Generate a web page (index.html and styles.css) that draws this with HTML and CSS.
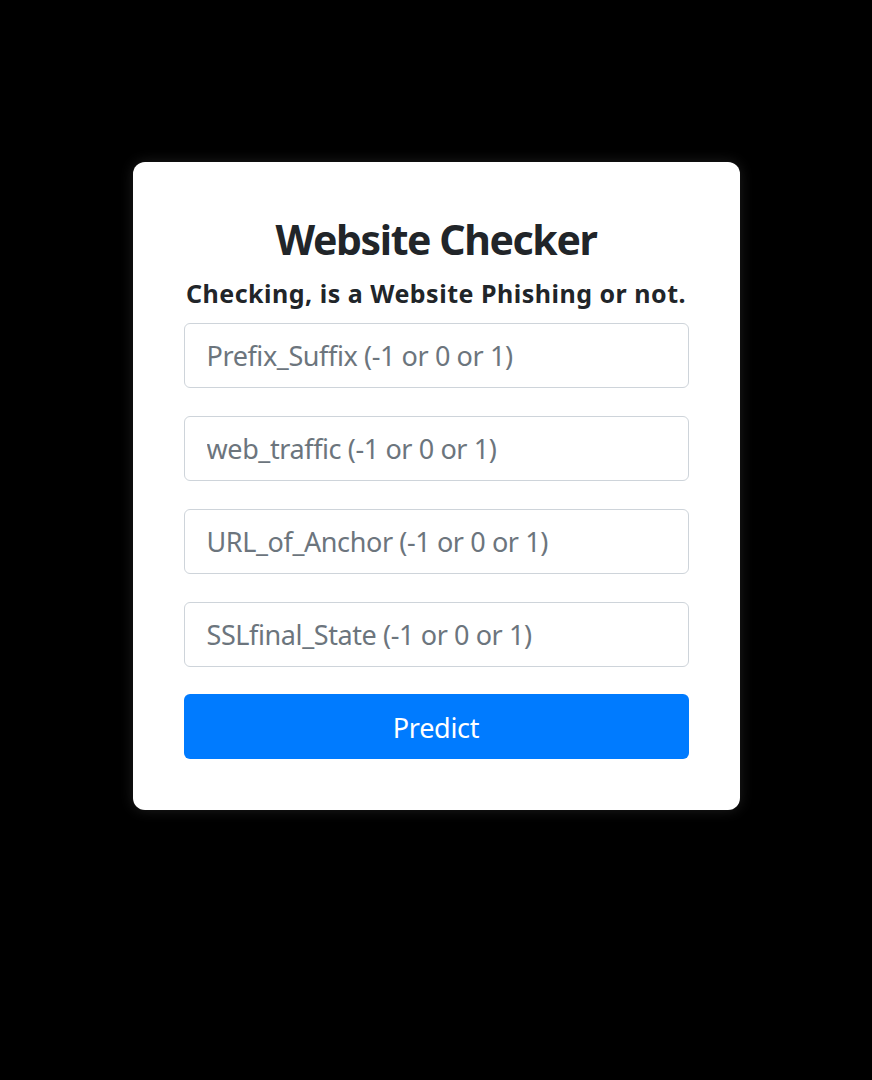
FILE: index.html
```html
<!DOCTYPE html>
<html lang="en">
<head>
<meta charset="utf-8">
<title>Website Checker</title>
<link rel="stylesheet" href="styles.css">
</head>
<body>
<main class="page">
  <form class="card">
    <h1 class="title">Website Checker</h1>
    <h2 class="subtitle">Checking, is a Website Phishing or not.</h2>
    <input class="field" type="text" placeholder="Prefix_Suffix (-1 or 0 or 1)">
    <input class="field" type="text" placeholder="web_traffic (-1 or 0 or 1)">
    <input class="field" type="text" placeholder="URL_of_Anchor (-1 or 0 or 1)">
    <input class="field" type="text" placeholder="SSLfinal_State (-1 or 0 or 1)">
    <button class="btn" type="button">Predict</button>
  </form>
</main>
</body>
</html>
```
FILE: styles.css
```css
html, body {
  margin: 0;
  padding: 0;
  background: #000;
}
body {
  font-family: "Noto Sans", "Open Sans", sans-serif;
  color: #212529;
}
.page {
  display: flex;
  justify-content: center;
  padding-top: 162px;
  height: 1080px;
  box-sizing: border-box;
}
.card {
  width: 607px;
  height: 648px;
  box-sizing: border-box;
  background: #fff;
  border-radius: 12px;
  box-shadow: 0 0 14px rgba(255, 255, 255, 0.12);
  padding: 53px 51px 0;
  display: flex;
  flex-direction: column;
  align-items: stretch;
}
.title {
  margin: 0;
  text-align: center;
  font-size: 41px;
  letter-spacing: -1.4px;
  font-weight: 700;
  line-height: 48px;
}
.subtitle {
  margin: 14px 0 14px;
  text-align: center;
  font-size: 25px;
  letter-spacing: 0.5px;
  font-weight: 700;
  line-height: 32px;
}
.field {
  height: 65px;
  box-sizing: border-box;
  margin: 0 0 28px;
  padding: 0 22px;
  border: 1px solid #ced4da;
  border-radius: 6px;
  font-family: inherit;
  font-size: 27px;
  letter-spacing: -0.4px;
  color: #495057;
  outline: none;
}
.field::placeholder {
  color: #6c757d;
}
.btn {
  height: 65px;
  margin-top: -1px;
  padding-top: 2px;
  border: none;
  border-radius: 6px;
  background: #007bff;
  color: #fff;
  font-family: inherit;
  font-size: 27px;
  letter-spacing: -0.3px;
  cursor: pointer;
}
```
